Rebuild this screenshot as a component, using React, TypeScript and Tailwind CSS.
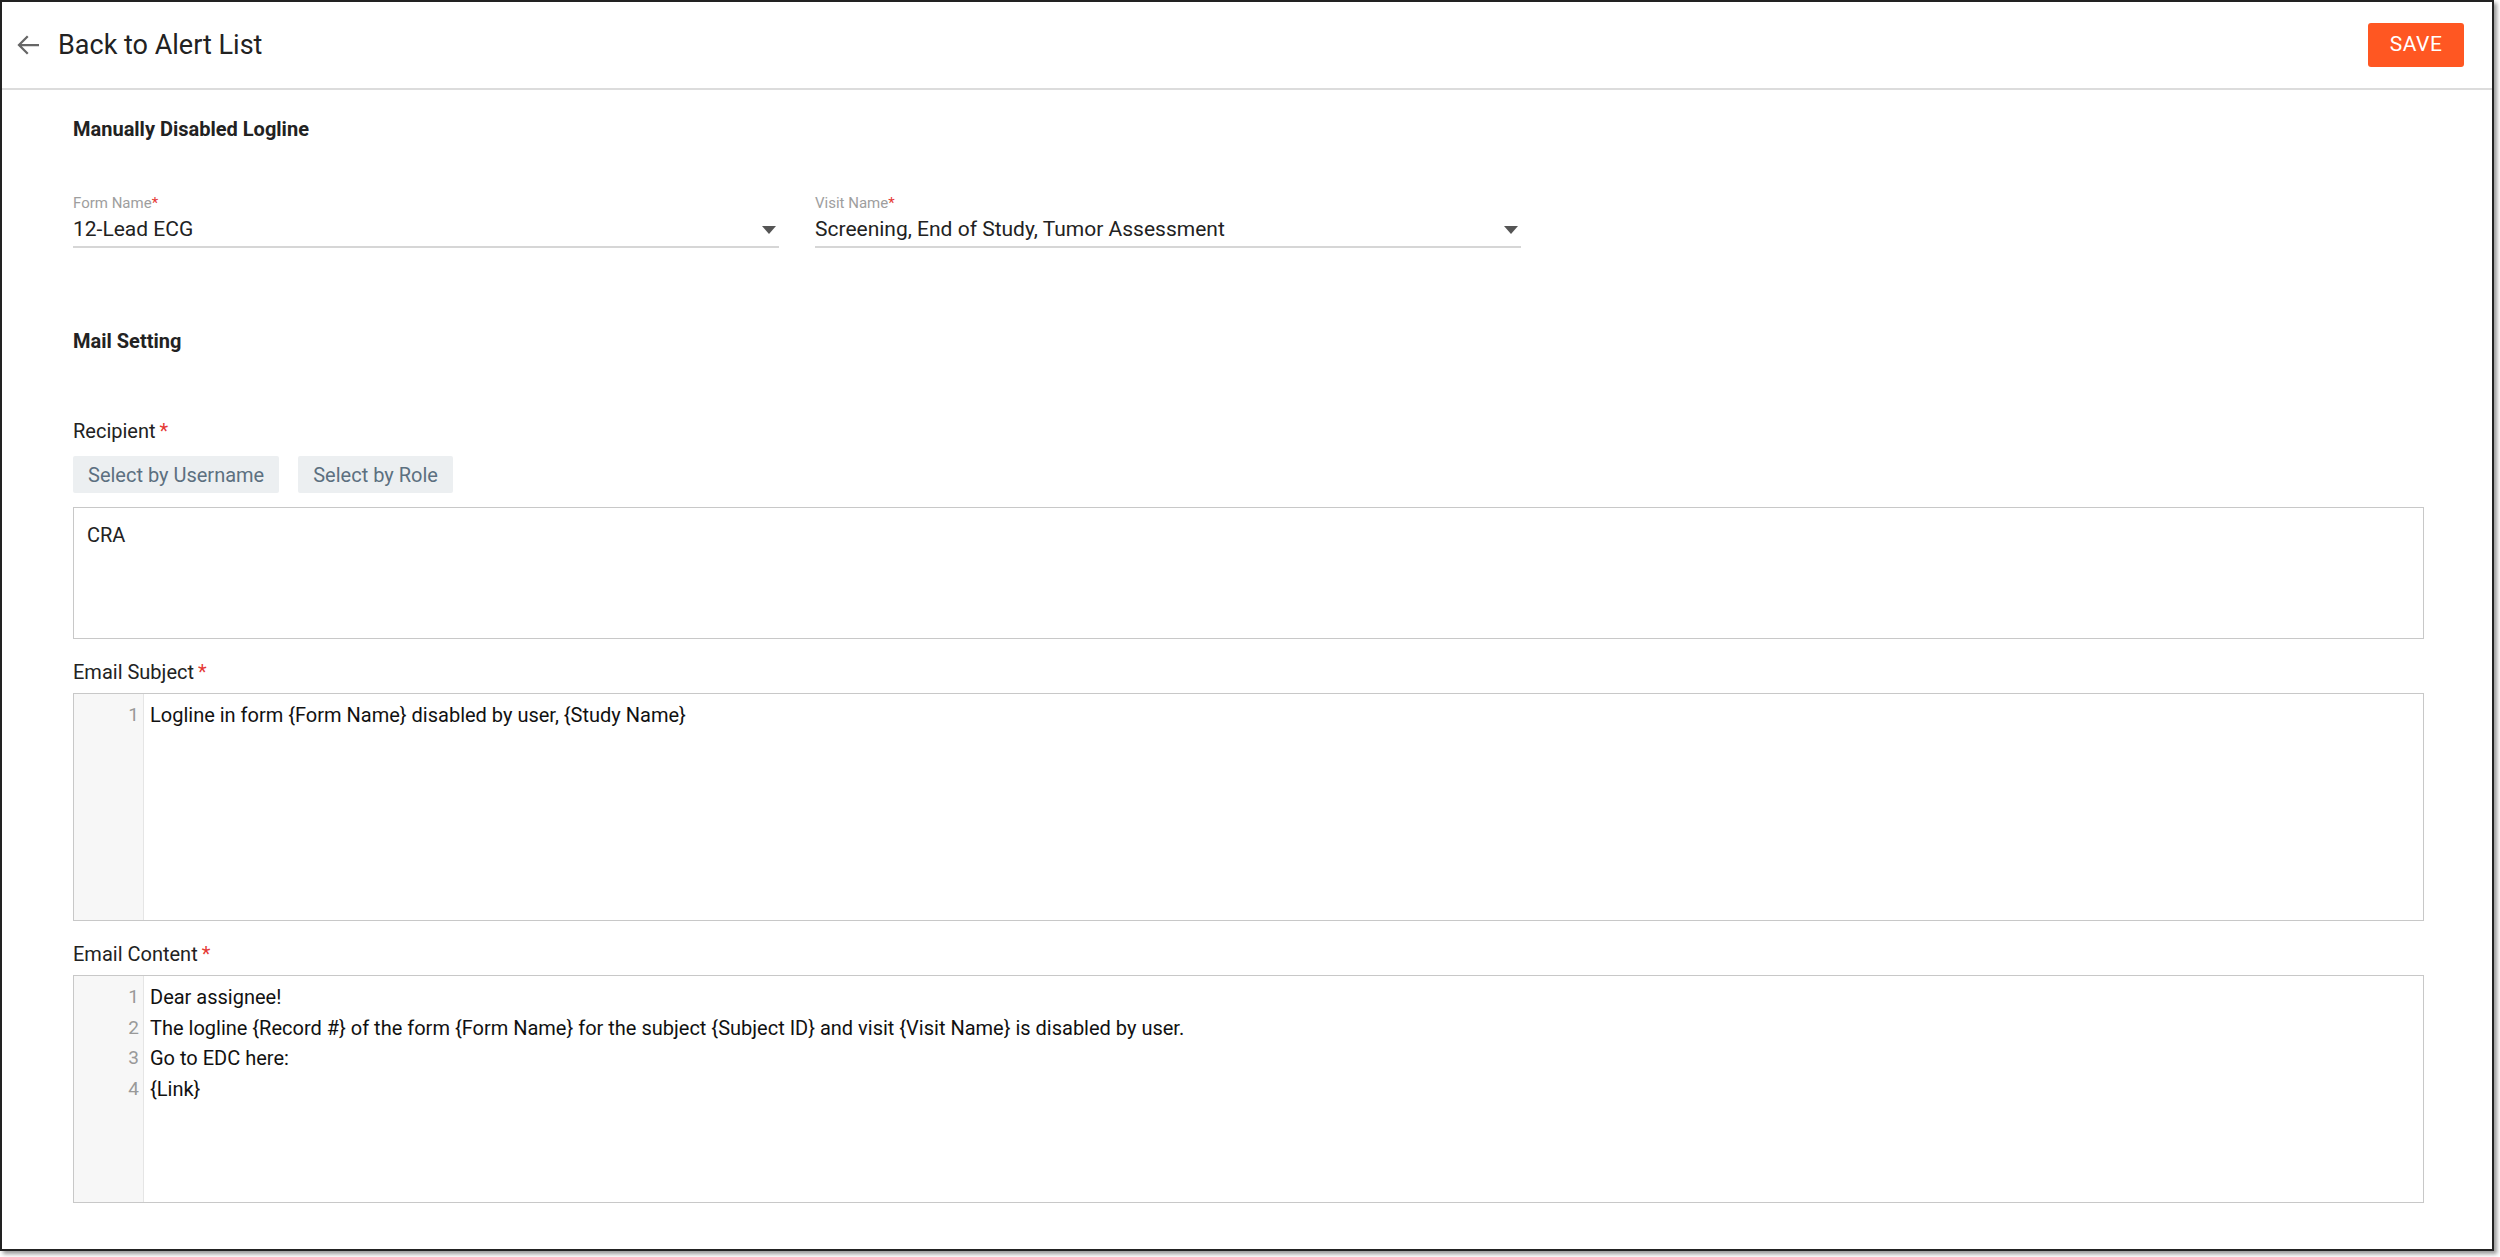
import React from "react";

const Star = () => <span className="text-[#e53935] ml-1">*</span>;

function Editor({ lines, h }: { lines: string[]; h: string }) {
  return (
    <div className={`flex border border-[#c8c8c8] ${h}`}>
      <div className="w-[70px] bg-[#f7f7f7] border-r border-[#e5e5e5] pt-[6px] text-right pr-[4px] text-[19px] leading-[30.5px] text-[#999]">
        {lines.map((_, i) => (
          <div key={i}>{i + 1}</div>
        ))}
      </div>
      <div className="pl-[6px] pt-[6px] text-[20px] leading-[30.5px] text-[#111]">
        {lines.map((l, i) => (
          <div key={i}>{l}</div>
        ))}
      </div>
    </div>
  );
}

function Select({ label, value, w }: { label: string; value: string; w: string }) {
  return (
    <div className={w}>
      <div className="text-[15px] text-[#9e9e9e] leading-[18px]">
        {label}
        <span className="text-[#e53935]">*</span>
      </div>
      <div className="flex items-center justify-between border-b-2 border-[#d6d6d6] h-[34px] mt-[2px]">
        <span className="text-[21px] text-[#222]">{value}</span>
        <svg width="16" height="10" viewBox="0 0 16 10" className="mr-[2px]">
          <path d="M1 1h14L8 9z" fill="#555" />
        </svg>
      </div>
    </div>
  );
}

export default function App() {
  return (
    <div className="bg-white w-[2500px] h-[1257px]" style={{ fontFamily: "Roboto, 'Liberation Sans', sans-serif" }}>
      <div className="w-[2494px] h-[1251px] border-2 border-[#222] shadow-[3px_3px_4px_rgba(0,0,0,0.4)] flex flex-col">
        <div className="h-[88px] border-b-2 border-[#dcdcdc] flex items-center justify-between pl-[12px] pr-[28px]">
          <div className="flex items-center">
            <svg width="30" height="30" viewBox="0 0 24 24">
              <path d="M20 12H5M11 5l-7 7 7 7" stroke="#666" strokeWidth="1.8" fill="none" />
            </svg>
            <span className="ml-[14px] text-[27px] text-[#222]">Back to Alert List</span>
          </div>
          <button className="bg-[#ff5722] text-white text-[21px] rounded-[3px] w-[96px] h-[44px] tracking-wide">SAVE</button>
        </div>
        <div className="pl-[71px] pr-[68px]">
          <div className="mt-[24px] text-[20px] font-bold text-[#222]">Manually Disabled Logline</div>
          <div className="flex gap-[36px] mt-[50px]">
            <Select label="Form Name" value="12-Lead ECG" w="w-[706px]" />
            <Select label="Visit Name" value="Screening, End of Study, Tumor Assessment" w="w-[706px]" />
          </div>
          <div className="mt-[78px] text-[20px] font-bold text-[#222]">Mail Setting</div>
          <div className="mt-[60px] text-[20px] text-[#222]">
            Recipient
            <Star />
          </div>
          <div className="flex gap-[19px] mt-[10px]">
            <button className="bg-[#eceff1] text-[#5c7080] text-[20px] h-[37px] px-[15px] rounded-[2px]">Select by Username</button>
            <button className="bg-[#eceff1] text-[#5c7080] text-[20px] h-[37px] px-[15px] rounded-[2px]">Select by Role</button>
          </div>
          <div className="mt-[14px] h-[132px] border border-[#c8c8c8] px-[13px] pt-[12px] text-[20px] text-[#222]">CRA</div>
          <div className="mt-[18px] text-[20px] text-[#222]">
            Email Subject
            <Star />
          </div>
          <div className="mt-[6px]">
            <Editor h="h-[228px]" lines={["Logline in form {Form Name} disabled by user, {Study Name}"]} />
          </div>
          <div className="mt-[18px] text-[20px] text-[#222]">
            Email Content
            <Star />
          </div>
          <div className="mt-[6px]">
            <Editor
              h="h-[228px]"
              lines={[
                "Dear assignee!",
                "The logline {Record #} of the form {Form Name} for the subject {Subject ID} and visit {Visit Name} is disabled by user.",
                "Go to EDC here:",
                "{Link}",
              ]}
            />
          </div>
        </div>
      </div>
    </div>
  );
}
